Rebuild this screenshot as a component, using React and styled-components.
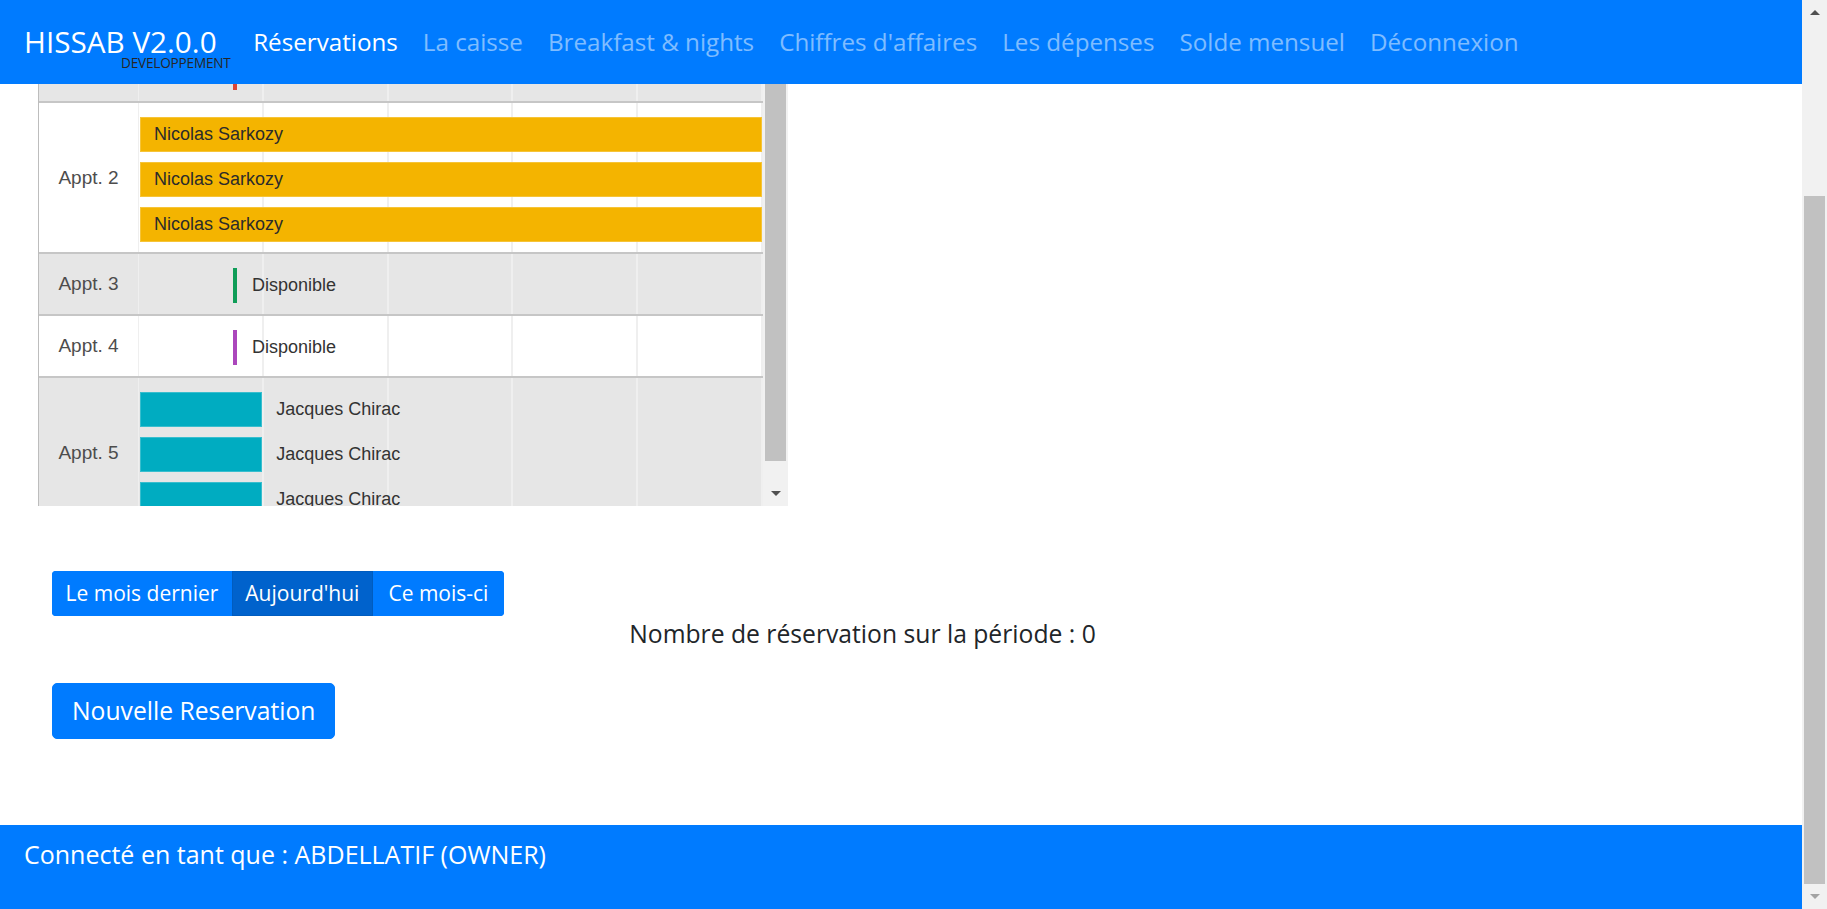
import React, { useLayoutEffect, useRef, useState } from "react";
import styled, { createGlobalStyle } from "styled-components";

const GlobalStyle = createGlobalStyle`
  html, body { height: 100%; overflow: hidden; }
  body {
    margin: 0;
    font-family: "Open Sans", "Liberation Sans", sans-serif;
    color: #212529;
    background: #fff;
  }
  #root { height: 100%; }
  *, *::before, *::after { box-sizing: border-box; }
`;

/* ---------- Window shell with a classic scrollbar ---------- */
const Shell = styled.div`
  display: flex;
  height: 100vh;
`;

const ScrollArea = styled.div`
  flex: 1;
  min-width: 0;
  height: 100%;
  overflow-y: auto;
  scrollbar-width: none;
  &::-webkit-scrollbar { display: none; }
`;

const ScrollbarRail = styled.div`
  flex: none;
  width: 25px;
  display: flex;
  flex-direction: column;
  background: #f1f1f1;
`;

const ScrollArrow = styled.div`
  flex: none;
  height: 25px;
  display: flex;
  align-items: center;
  justify-content: center;
`;

const ScrollTrack = styled.div`
  flex: 1;
  min-height: 0;
  display: grid;
  padding: 0 2px;
`;

const ScrollThumb = styled.div`
  grid-row: 2;
  background: #c1c1c1;
`;

function Arrow({ dir, disabled }) {
  const fill = disabled ? "#a3a3a3" : "#505050";
  return (
    <ScrollArrow>
      <svg width="10" height="5" viewBox="0 0 10 5">
        {dir === "up" ? (
          <polygon points="0,5 5,0 10,5" fill={fill} />
        ) : (
          <polygon points="0,0 10,0 5,5" fill={fill} />
        )}
      </svg>
    </ScrollArrow>
  );
}

function FakeScrollbar({ top, size, atEnd }) {
  const rest = Math.max(0, 1 - top - size);
  return (
    <ScrollbarRail>
      <Arrow dir="up" disabled={top <= 0.0001} />
      <ScrollTrack style={{ gridTemplateRows: `${top}fr ${size}fr ${rest}fr` }}>
        <ScrollThumb />
      </ScrollTrack>
      <Arrow dir="down" disabled={atEnd} />
    </ScrollbarRail>
  );
}

function useScrollMetrics(ref, toEnd) {
  const [m, setM] = useState({ top: 0, size: 1, atEnd: false });
  useLayoutEffect(() => {
    const el = ref.current;
    if (!el) return;
    if (toEnd) el.scrollTop = el.scrollHeight;
    const h = el.scrollHeight || 1;
    setM({
      top: el.scrollTop / h,
      size: Math.min(1, el.clientHeight / h),
      atEnd: el.scrollTop + el.clientHeight >= h - 1,
    });
  }, []);
  return m;
}

/* ---------- Navbar ---------- */
const Navbar = styled.header`
  position: sticky;
  top: 0;
  z-index: 10;
  height: 84px;
  display: flex;
  align-items: flex-start;
  padding: 0 24px;
  background: #007bff;
`;

const Brand = styled.a`
  display: flex;
  flex-direction: column;
  align-items: flex-end;
  padding-top: 27px;
  text-decoration: none;
`;

const BrandTitle = styled.span`
  font-size: 29.7px;
  line-height: 29px;
  color: #fff;
  white-space: nowrap;
`;

const BrandSub = styled.span`
  font-size: 13.6px;
  line-height: 14px;
  color: #262626;
  margin-right: -14px;
  white-space: nowrap;
  letter-spacing: -0.2px;
`;

const NavList = styled.nav`
  display: flex;
  margin-left: 24px;
  padding-top: 30px;
`;

const NavLink = styled.a`
  padding: 0 12.5px;
  font-size: 24.2px;
  line-height: 24px;
  white-space: nowrap;
  text-decoration: none;
  color: ${(p) => (p.$active ? "#fff" : "rgba(255,255,255,0.5)")};
`;

/* ---------- Timeline ---------- */
const DAY = 124.8;

const Main = styled.main`
  padding: 183px 115px 86px 38px;
`;

const TimelineFrame = styled.div`
  display: flex;
  width: 750px;
  height: 465px;
`;

const RowsViewport = styled.div`
  width: 725px;
  height: 100%;
  overflow-y: auto;
  border-left: 1px solid #bdbdbd;
  scrollbar-width: none;
  &::-webkit-scrollbar { display: none; }
`;

const Row = styled.div`
  display: grid;
  grid-template-columns: 100px 624px;
  border-bottom: 2px solid #c6c6c6;
  background: ${(p) => (p.$shade ? "#e6e6e6" : "#fff")};
`;

const RowLabel = styled.div`
  display: flex;
  align-items: center;
  justify-content: center;
  border-right: 1px solid #efefef;
  font-family: "Liberation Sans", Arial, sans-serif;
  font-size: 19px;
  color: #4d4d4d;
`;

const ChartCell = styled.div`
  display: flex;
  flex-direction: column;
  gap: 10px;
  padding: 14px 0 ${(p) => (p.$tall ? 10 : 11)}px;
  background-image: repeating-linear-gradient(
    to right,
    transparent 0 122.8px,
    #efefef 122.8px 124.8px
  );
`;

const BarLine = styled.div`
  display: flex;
  align-items: center;
  height: 35px;
`;

const Bar = styled.div`
  flex: none;
  height: 35px;
  display: flex;
  align-items: center;
  padding-left: 14px;
  background: ${(p) => p.$color};
  box-shadow: inset 0 0 0 1px rgba(255, 255, 255, 0.22);
  font-family: "Liberation Sans", Arial, sans-serif;
  font-size: 18px;
  color: #2b2b2b;
  white-space: nowrap;
  overflow: hidden;
`;

const BarText = styled.span`
  font-family: "Liberation Sans", Arial, sans-serif;
  font-size: 18px;
  color: #333;
  white-space: nowrap;
  margin-left: ${(p) => p.$gap}px;
`;

const Marker = styled.div`
  flex: none;
  width: 4px;
  height: 35px;
  background: ${(p) => p.$color};
`;

/* ---------- Controls ---------- */
const Controls = styled.section`
  display: flex;
  flex-direction: column;
  align-items: flex-start;
  padding: 65px 14px 0;
`;

const ButtonGroup = styled.div`
  display: inline-flex;
  border-radius: 4px;
  overflow: hidden;
`;

const GroupButton = styled.button`
  font-family: "Open Sans", sans-serif;
  font-size: 21px;
  line-height: 31px;
  padding: 6px ${(p) => p.$pad || 12.5}px;
  border: 1px solid ${(p) => (p.$active ? "#005cbf" : "#007bff")};
  background: ${(p) => (p.$active ? "#0062cc" : "#007bff")};
  color: #fff;
  cursor: pointer;
`;

const Summary = styled.p`
  align-self: stretch;
  margin: 0;
  text-align: center;
  font-size: 24.7px;
  line-height: 36px;
  color: #212529;
`;

const PrimaryButton = styled.button`
  margin-top: 31px;
  font-family: "Open Sans", sans-serif;
  font-size: 24.7px;
  line-height: 36px;
  padding: 9px 19px;
  border: 1px solid #007bff;
  border-radius: 5px;
  background: #007bff;
  color: #fff;
  cursor: pointer;
`;

const Footer = styled.footer`
  height: 84px;
  padding: 11px 24px 0;
  background: #007bff;
  color: #fff;
  font-size: 25px;
  line-height: 36px;
  white-space: nowrap;
`;

const navItems = [
  "Réservations",
  "La caisse",
  "Breakfast & nights",
  "Chiffres d'affaires",
  "Les dépenses",
  "Solde mensuel",
  "Déconnexion",
];

const rows = [
  { label: "Appt. 1", shade: true, free: true, color: "#db4437", at: 0.755 },
  {
    label: "Appt. 2",
    shade: false,
    color: "#f4b400",
    items: [
      { name: "Nicolas Sarkozy", start: 0, end: 5 },
      { name: "Nicolas Sarkozy", start: 0, end: 5 },
      { name: "Nicolas Sarkozy", start: 0, end: 5 },
    ],
  },
  { label: "Appt. 3", shade: true, free: true, color: "#0f9d58", at: 0.755 },
  { label: "Appt. 4", shade: false, free: true, color: "#ab47bc", at: 0.755 },
  {
    label: "Appt. 5",
    shade: true,
    color: "#00acc1",
    items: [
      { name: "Jacques Chirac", start: 0, end: 1 },
      { name: "Jacques Chirac", start: 0, end: 1 },
      { name: "Jacques Chirac", start: 0, end: 1 },
    ],
  },
];

function TimelineRow({ row }) {
  return (
    <Row $shade={row.shade}>
      <RowLabel>{row.label}</RowLabel>
      <ChartCell $tall={!row.free}>
        {row.free ? (
          <BarLine style={{ paddingLeft: Math.round(row.at * DAY) }}>
            <Marker $color={row.color} />
            <BarText $gap={15}>Disponible</BarText>
          </BarLine>
        ) : (
          row.items.map((it, i) => {
            const width = (it.end - it.start) * DAY - 2.5;
            const inside = width > 200;
            return (
              <BarLine key={i} style={{ paddingLeft: 1 + it.start * DAY }}>
                <Bar $color={row.color} style={{ width }}>
                  {inside ? it.name : null}
                </Bar>
                {!inside && <BarText $gap={14}>{it.name}</BarText>}
              </BarLine>
            );
          })
        )}
      </ChartCell>
    </Row>
  );
}

function Timeline() {
  const ref = useRef(null);
  const m = useScrollMetrics(ref, false);
  return (
    <TimelineFrame>
      <RowsViewport ref={ref}>
        {rows.map((r) => (
          <TimelineRow key={r.label} row={r} />
        ))}
      </RowsViewport>
      <FakeScrollbar top={m.top} size={m.size} atEnd={m.atEnd} />
    </TimelineFrame>
  );
}

export default function App() {
  const pageRef = useRef(null);
  const page = useScrollMetrics(pageRef, true);

  return (
    <>
      <GlobalStyle />
      <Shell>
        <ScrollArea ref={pageRef}>
          <Navbar>
            <Brand href="#">
              <BrandTitle>HISSAB V2.0.0</BrandTitle>
              <BrandSub>DEVELOPPEMENT</BrandSub>
            </Brand>
            <NavList>
              {navItems.map((n, i) => (
                <NavLink key={n} href="#" $active={i === 0}>
                  {n}
                </NavLink>
              ))}
            </NavList>
          </Navbar>
          <Main>
            <Timeline />
            <Controls>
              <ButtonGroup>
                <GroupButton>Le mois dernier</GroupButton>
                <GroupButton $active>Aujourd'hui</GroupButton>
                <GroupButton $pad={14.5}>Ce mois-ci</GroupButton>
              </ButtonGroup>
              <Summary>Nombre de réservation sur la période : 0</Summary>
              <PrimaryButton>Nouvelle Reservation</PrimaryButton>
            </Controls>
          </Main>
          <Footer>Connecté en tant que : ABDELLATIF (OWNER)</Footer>
        </ScrollArea>
        <FakeScrollbar top={page.top} size={page.size} atEnd={page.atEnd} />
      </Shell>
    </>
  );
}
